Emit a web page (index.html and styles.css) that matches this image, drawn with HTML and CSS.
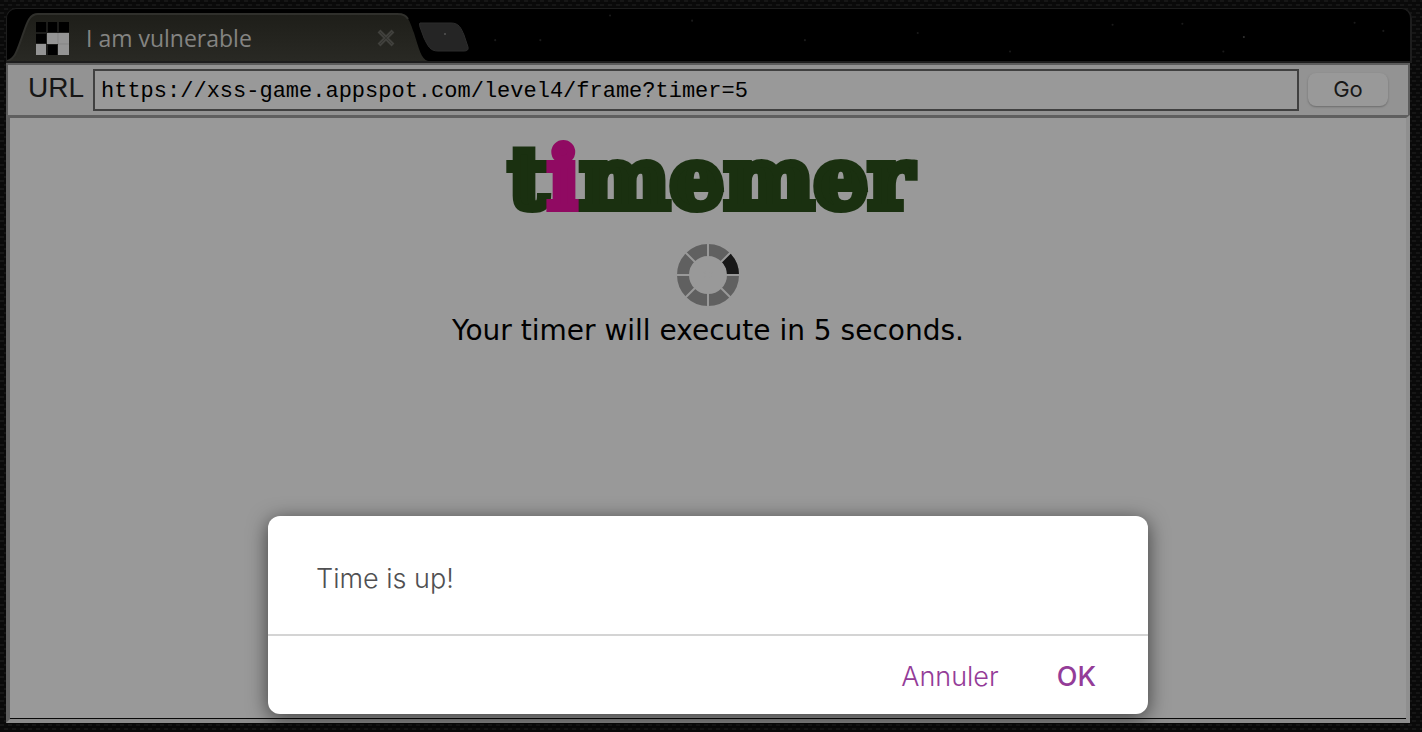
FILE: index.html
```html
<!DOCTYPE html>
<html lang="en">
<head>
<meta charset="utf-8">
<title>I am vulnerable</title>
<link rel="stylesheet" href="styles.css">
</head>
<body>
<main class="window">
  <header class="tabs">
    <svg class="tab-shape" width="480" height="52" viewBox="0 0 480 52" aria-hidden="true">
      <defs><linearGradient id="tab" x2="0" y2="1"><stop offset="0" stop-color="#1e1e19"/><stop offset="1" stop-color="#292924"/></linearGradient></defs>
      <path d="M0 52C8 50 10 42 15 28C20 14 22 5 31 5H390C401 5 402 10 407 24C412 40 414 50 421 52Z" fill="url(#tab)"/>
      <path d="M0 52C8 50 10 42 15 28C20 14 22 5 31 5H390C397 5 399 7 401 10" fill="none" stroke="#30302c" stroke-width="2"/>
      <path d="M413 14H444C452 14 454 19 457 26L461 38Q462 42 457 42H431C423 42 421 37 417 29L413 18Q412 14 413 14Z" fill="#252525" stroke="#2c2c2c"/>
      <circle cx="438" cy="25" r="1" fill="#555"/>
    </svg>
    <svg class="stars" viewBox="0 0 900 52" preserveAspectRatio="xMidYMid slice" aria-hidden="true">
      <g fill="#1b1b1b"><circle cx="8" cy="31" r="1"/><circle cx="52" cy="31" r="1"/><circle cx="120" cy="7" r="1"/><circle cx="200" cy="12" r="1"/><circle cx="310" cy="31" r="1"/><circle cx="420" cy="24" r="1"/><circle cx="510" cy="42" r="1"/><circle cx="610" cy="16" r="1"/><circle cx="678" cy="15" r="1"/><circle cx="718" cy="42" r="1"/><circle cx="846" cy="14" r="1"/><circle cx="874" cy="22" r="1"/></g>
      <circle cx="738" cy="28" r="1" fill="#333"/>
    </svg>
    <svg class="favicon" width="33" height="33" viewBox="0 0 33 33" aria-hidden="true">
      <path d="M0 0H33V33H0Z" fill="#1c1c1a"/>
      <path d="M0 0H10V10H0ZM12 0H21V10H12ZM23 0H33V10H23ZM0 12H10V21H0ZM12 23H21V33H12Z" fill="#000"/>
      <path d="M11 11H33V22H11ZM0 22H10V33H0ZM22 22H33V33H22Z" fill="#949494"/>
      <path d="M22 11V22M22 22H33" stroke="#858585"/>
    </svg>
    <span class="tab-title">I am vulnerable</span>
    <button class="tab-close" aria-label="Close tab">
      <svg width="18" height="18" viewBox="0 0 18 18"><path d="M2 2L16 16M16 2L2 16" stroke="#40403c" stroke-width="4"/><path d="M3 3L15 15M15 3L3 15" stroke="#33332f" stroke-width="1"/></svg>
    </button>
  </header>
  <form class="address">
    <label for="url">URL</label>
    <input id="url" type="text" value="https://xss-game.appspot.com/level4/frame?timer=5" spellcheck="false">
    <button type="button" class="go">Go</button>
  </form>
  <section class="frame">
    <h1 class="logo">t<span class="logo-i">i</span>memer</h1>
    <svg class="spinner" width="64" height="64" viewBox="-32 -32 64 64" role="img" aria-label="Loading">
      <circle r="25" fill="none" stroke="#606060" stroke-width="12"/>
      <path d="M25 0A25 25 0 0 0 17.7 -17.7" fill="none" stroke="#181818" stroke-width="12"/>
      <path d="M0 -32V32M-32 0H32M-23 -23L23 23M-23 23L23 -23" stroke="#999" stroke-width="2"/>
    </svg>
    <p class="status">Your timer will execute in 5 seconds.</p>
  </section>
</main>
<div class="dialog" role="dialog" aria-modal="true" aria-labelledby="message">
  <p id="message" class="message">Time is up!</p>
  <div class="actions">
    <button>Annuler</button>
    <button class="primary">OK</button>
  </div>
</div>
</body>
</html>
```
FILE: styles.css
```css
* { box-sizing: border-box; }
body {
  margin: 0;
  min-height: 100vh;
  padding: 8px 12px 9px 6px;
  display: flex;
  background-color: #090909;
  background-image:
    repeating-linear-gradient(0deg, #090909 0 2px, transparent 2px 4px),
    conic-gradient(#161616 25%, #0b0b0b 0 50%, #161616 0 75%, #0b0b0b 0);
  background-size: 8px 8px;
  font-family: "Liberation Sans", sans-serif;
}
p, h1 { margin: 0; }
button { border: 0; background: none; padding: 0; }
.window { flex: 1; display: flex; flex-direction: column; }
.tabs {
  position: relative;
  display: flex;
  align-items: center;
  height: 55px;
  margin-right: -2px;
  padding: 6px 0 0 29px;
  background: #000;
  border: solid #1d1d1d;
  border-width: 1px 2px 2px 1px;
  border-radius: 10px 10px 0 0;
}
.tab-shape { position: absolute; left: 0; bottom: 0; }
.stars { position: absolute; left: 480px; right: 0; top: 0; width: calc(100% - 480px); height: 100%; }
.favicon { position: relative; }
.tab-title {
  position: relative;
  width: 291px;
  margin-left: 17px;
  color: #848482;
  font: 23px "Open Sans", sans-serif;
}
.tab-close { position: relative; display: flex; }
.address {
  display: flex;
  align-items: center;
  height: 52px;
  padding: 3px 20px;
  background: #939393;
  border: 2px solid #5c5c5c;
  border-bottom: 0;
}
.address label { color: #161616; font-size: 28px; margin-right: 9px; padding-bottom: 4px; }
.address input {
  flex: 1;
  min-width: 0;
  height: 42px;
  padding: 2px 6px 0;
  border: 2px solid #404040;
  border-radius: 0;
  background: #999;
  color: #000;
  font: 22px "Liberation Mono", monospace;
}
.go {
  width: 80px;
  height: 33px;
  margin: 0 0 2px 9px;
  border-radius: 8px;
  background: #999;
  box-shadow: 0 1px 2px #6c6c6c;
  color: #181818;
  font: 22px Inter, sans-serif;
}
.frame {
  flex: 1;
  display: flex;
  flex-direction: column;
  align-items: center;
  border: 3px solid #5f5f5f;
  border-left-width: 4px;
  border-right: 4px solid #8f8f8f;
  border-bottom: 4px solid #8c8c8c;
  background: #999;
  box-shadow: inset 0 -1px #080808;
}
.logo {
  margin: 10px 0 0 5px;
  color: #1a3010;
  -webkit-text-stroke: 8px #1a3010;
  font: bold 85px/100px "DejaVu Serif", serif;
}
.logo-i { color: #900a62; -webkit-text-stroke-color: #900a62; }
.spinner { margin-top: 15px; }
.status { color: #000; font: 28px/48px "DejaVu Sans", sans-serif; }
.dialog {
  position: absolute;
  left: 50%;
  bottom: 18px;
  width: 880px;
  max-width: 100%;
  margin-left: -3px;
  transform: translateX(-50%);
  border-radius: 12px;
  background: #fff;
  box-shadow: 0 4px 20px rgb(0 0 0 / 60%);
  font: 27px/34px Inter, sans-serif;
}
.message { padding: 46px 48px 38px; color: #505052; font-weight: 300; }
.actions {
  display: flex;
  justify-content: flex-end;
  gap: 58px;
  padding: 24px 52px 20px;
  border-top: 2px solid #d4d4d4;
}
.actions button { color: #943c98; font: inherit; font-weight: 300; }
.actions .primary { font-weight: 500; }
```
